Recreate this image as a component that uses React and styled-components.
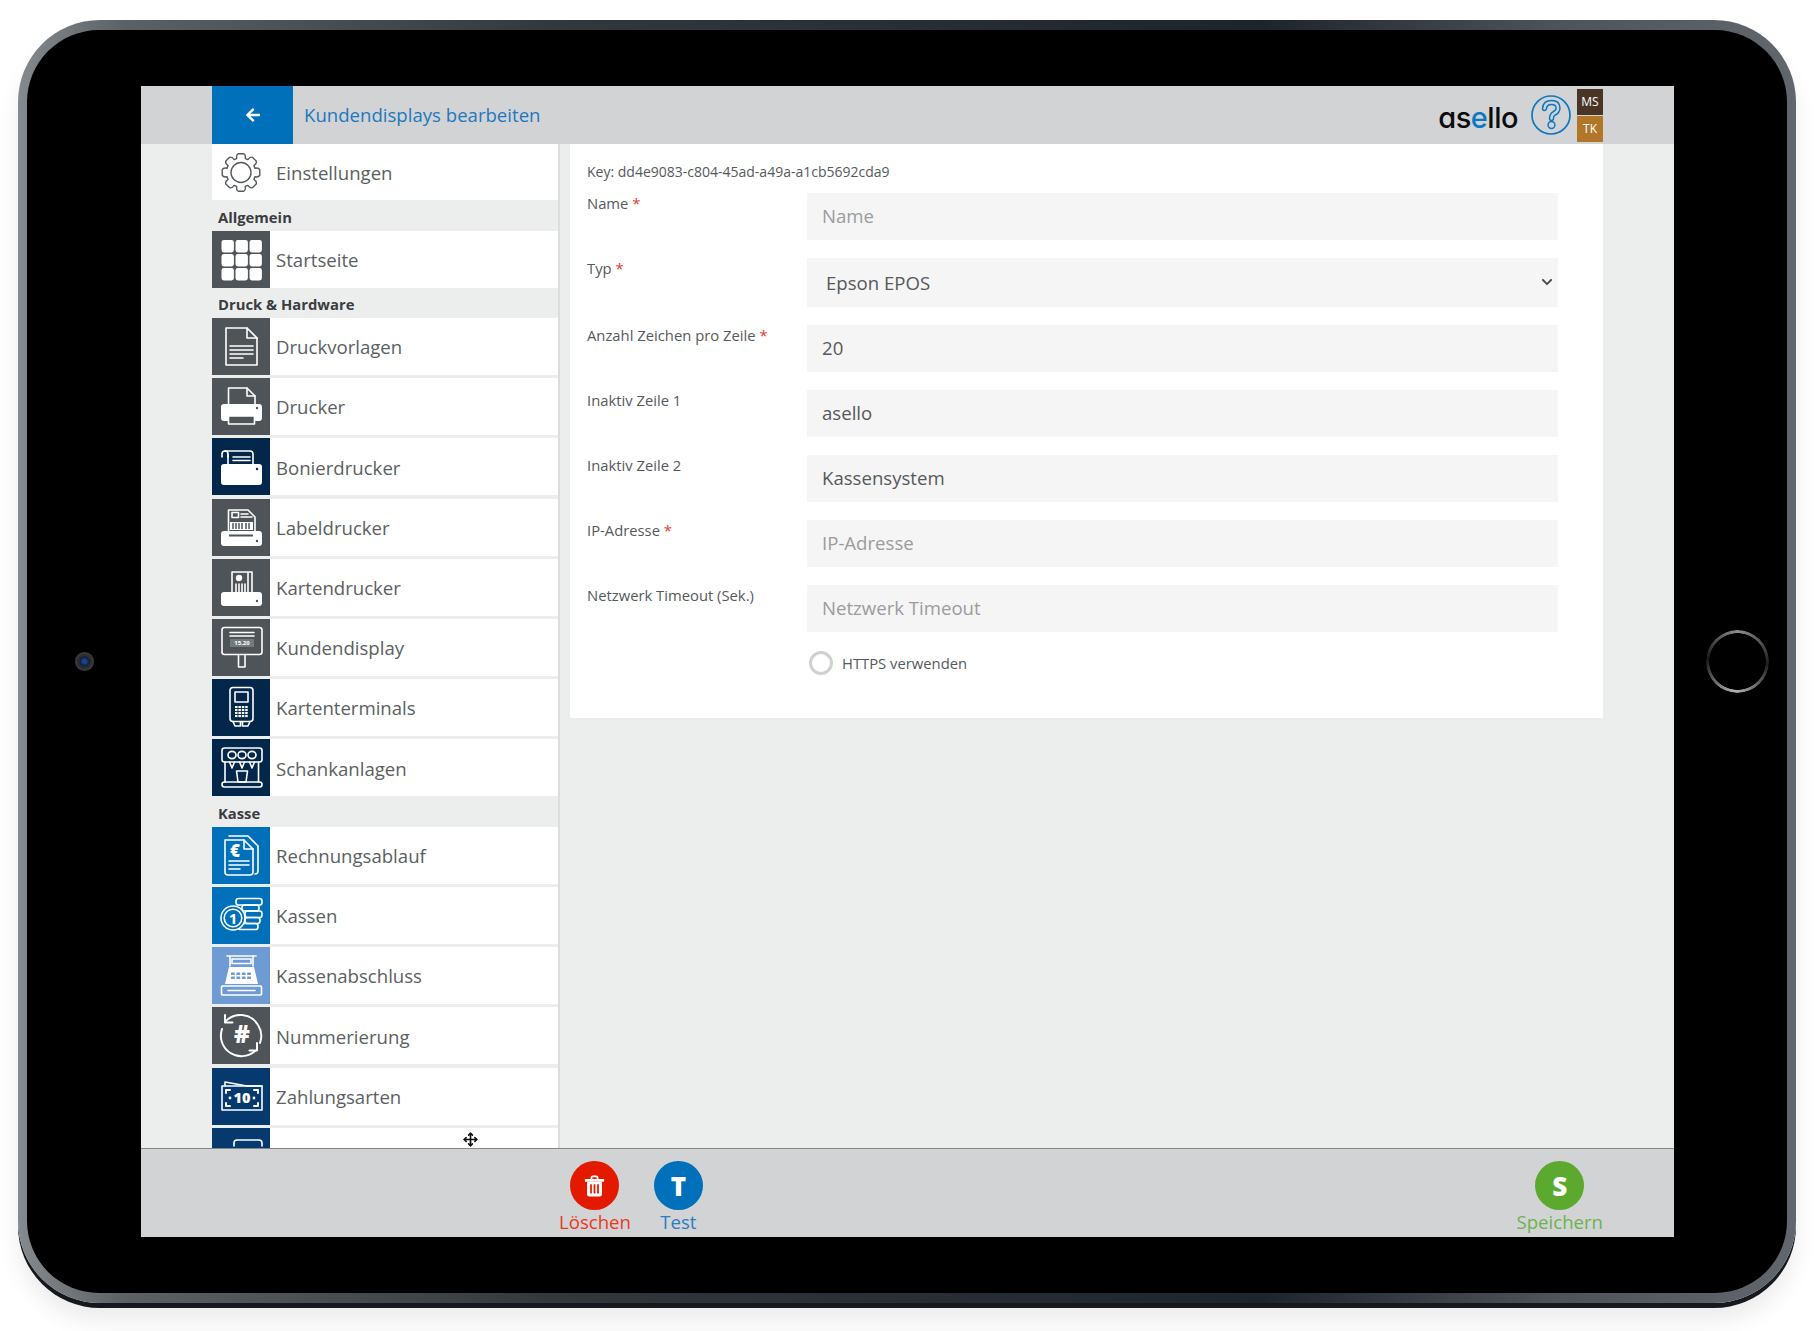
import React from 'react';
import styled, { createGlobalStyle } from 'styled-components';
import { FaArrowLeft, FaChevronDown } from 'react-icons/fa';
import { Move } from 'lucide-react';

const GlobalStyle = createGlobalStyle`
  html, body {
    margin: 0;
    background: #fff;
    font-family: "Open Sans", sans-serif;
  }
  * { box-sizing: border-box; }
`;

const GRAY = '#4e5458';
const NAVY = '#02274a';
const BLUE = '#0070ba';
const LIGHT = '#6f9bd4';
const DEEP = '#063a6e';

// gear outline with 8 teeth
const gearPath = (() => {
  const cx = 20, cy = 20, outer = 19, inner = 14.6;
  const pts = [];
  for (let i = 0; i < 8; i++) {
    const a = (i * Math.PI) / 4;
    const at = (r, d) => `${(cx + r * Math.sin(a + d)).toFixed(2)} ${(cy - r * Math.cos(a + d)).toFixed(2)}`;
    pts.push(`${i === 0 ? 'M' : 'L'}${at(inner, -0.3)}`);
    pts.push(`Q${at(outer - 0.5, -0.27)} ${at(outer, -0.14)}`);
    pts.push(`L${at(outer, 0.14)}`);
    pts.push(`Q${at(outer - 0.5, 0.27)} ${at(inner, 0.3)}`);
    const next = `${(cx + inner * Math.sin(a + Math.PI / 4 - 0.3)).toFixed(2)} ${(cy - inner * Math.cos(a + Math.PI / 4 - 0.3)).toFixed(2)}`;
    pts.push(`A${inner} ${inner} 0 0 1 ${next}`);
  }
  return pts.join(' ') + 'Z';
})();

const Glyph = styled.svg`
  display: block;
  width: 58px;
  height: 57px;
  fill: none;
  stroke: #fff;
  stroke-width: 1.6;
  stroke-linejoin: round;
  stroke-linecap: round;
`;

const Icon = ({ children }) => <Glyph viewBox="0 0 58 57">{children}</Glyph>;

const solid = { fill: '#fff', stroke: 'none' };
const cut = { fill: 'currentColor', stroke: 'none' };

const PrinterBody = ({ y = 26, h = 21, dotY = 31 }) => (
  <>
    <rect x="9" y={y} width="41" height={h} rx="3" {...solid} />
    <circle cx="45" cy={dotY} r="1.2" {...cut} />
  </>
);

const icons = {
  gear: (
    <Glyph viewBox="0 0 58 57">
      <g transform="translate(9 8.5)" style={{ stroke: '#55595c', strokeWidth: 1.4 }}>
        <path d={gearPath} />
        <circle cx="20" cy="20" r="10" />
      </g>
    </Glyph>
  ),
  grid: (
    <Icon>
      {[0, 1, 2].map((r) =>
        [0, 1, 2].map((c) => (
          <rect key={`${r}${c}`} x={9.5 + c * 14} y={9 + r * 14} width="12.4" height="12.4" rx="2.4" {...solid} />
        ))
      )}
    </Icon>
  ),
  doc: (
    <Icon>
      <path d="M14 10H35L45 20V47H14Z" />
      <path d="M35 10V20H45" />
      <path d="M18 28H41M18 32H41M18 36H41M18 40H31" />
    </Icon>
  ),
  printer: (
    <Icon>
      <path d="M16.5 28V10H35L43 18V28" />
      <path d="M35 10V18H43" />
      <PrinterBody y={26} h={17} dotY={30} />
      <rect x="16.5" y="38" width="26" height="8" fill="currentColor" />
    </Icon>
  ),
  receipt: (
    <Icon>
      <path d="M10 19V16Q10 13 13 13H38Q41 13 41 16V27" />
      <path d="M16 19V16Q16 13 13 13" />
      <path d="M16 26V16M21 19H38M21 22.5H38" />
      <PrinterBody y={26} h={21} dotY={31} />
    </Icon>
  ),
  label: (
    <Icon>
      <path d="M16.5 33V11H36L43 18V33" />
      <rect x="20" y="13.5" width="6.5" height="5" />
      <path d="M29 15H36M29 18H40" />
      <rect x="18" y="23" width="23" height="8" {...solid} />
      <path d="M21 24.5V29.5M24 24.5V29.5M27 24.5V29.5M30 24.5V29.5M34 24.5V29.5M37 24.5V29.5" style={{ stroke: 'currentColor', strokeWidth: 1.5 }} />
      <PrinterBody y={32} h={15} dotY={42} />
      <rect x="17" y="35.5" width="24" height="2" {...cut} />
    </Icon>
  ),
  cardPrinter: (
    <Icon>
      <path d="M20 34V13H40V34" />
      <circle cx="27" cy="19" r="3.2" {...solid} />
      <path d="M24 25V33M27 25V33M30 25V33M33 25V33" />
      <path d="M36 14V33" />
      <rect x="9" y="33" width="41" height="14" rx="3" {...solid} />
      <circle cx="45" cy="42" r="1.2" {...cut} />
    </Icon>
  ),
  display: (
    <Icon>
      <rect x="10" y="8.5" width="40" height="27" rx="2.5" />
      <path d="M18 13.5H42M18 17H42" />
      <rect x="18" y="20" width="24" height="8" fill="rgba(255,255,255,.22)" stroke="none" />
      <text x="30" y="26.2" textAnchor="middle" fontSize="6" fontWeight="700" fontFamily="Open Sans" fill="#fff" stroke="none">15,20</text>
      <path d="M26.5 35.5V48H33V35.5" />
    </Icon>
  ),
  terminal: (
    <Icon>
      <rect x="18" y="8.5" width="23" height="34" rx="3" />
      <rect x="23" y="13" width="13" height="10" />
      {[0, 1, 2, 3].map((r) =>
        [0, 1, 2, 3].map((c) => (
          <rect key={`${r}${c}`} x={23 + c * 3.4} y={27 + r * 3} width="2.5" height="2.1" {...solid} />
        ))
      )}
      <path d="M21 42.5L23 47H28.5V43M30.5 43V47H36L38 42.5" />
    </Icon>
  ),
  tap: (
    <Icon>
      <rect x="10" y="9" width="40" height="14" rx="2.5" />
      <ellipse cx="20" cy="16" rx="4" ry="3.6" />
      <ellipse cx="30" cy="16" rx="4" ry="3.6" />
      <ellipse cx="40" cy="16" rx="4" ry="3.6" />
      <path d="M17.5 23L20 29L22.5 23M27.5 23L30 29L32.5 23M37.5 23L40 29L42.5 23" />
      <path d="M13 23V43M46.5 23V43" />
      <path d="M24.5 32H35.5L34 43H26Z" />
      <rect x="10" y="43" width="40" height="5" rx="2.4" />
    </Icon>
  ),
  invoice: (
    <Icon>
      <path d="M17 9H36L46 19V44Q46 47 43 47" />
      <path d="M13 13H32L41 22V45Q41 48 38 48H16Q13 48 13 45Z" fill="currentColor" />
      <path d="M32 13V22H41" />
      <text x="23" y="30" textAnchor="middle" fontSize="17" fontWeight="800" fontFamily="Open Sans" fill="#fff" stroke="none">€</text>
      <path d="M17 34H37M17 38H37M17 42H28" />
    </Icon>
  ),
  coins: (
    <Icon>
      <rect x="24" y="11.5" width="26" height="6.5" rx="2.6" />
      <rect x="30" y="18" width="17" height="6" rx="2.6" />
      <rect x="33" y="24" width="17" height="6.5" rx="2.6" />
      <rect x="33" y="30.5" width="15" height="6" rx="2.6" />
      <rect x="26" y="36.5" width="20" height="6" rx="2.6" />
      <circle cx="21" cy="31" r="12" fill="currentColor" />
      <circle cx="21" cy="31" r="8.8" />
      <text x="21" y="36.6" textAnchor="middle" fontSize="15" fontWeight="700" fontFamily="Open Sans" fill="#fff" stroke="none">1</text>
    </Icon>
  ),
  register: (
    <Icon>
      <path d="M15 9H44" />
      <path d="M18 9V19M41 9V19" />
      <rect x="20" y="12" width="19" height="4.5" />
      <path d="M17 20H42L46 37H13Z" {...solid} />
      {[0, 1].map((r) =>
        [0, 1, 2, 3].map((c) => (
          <rect key={`${r}${c}`} x={19 + c * 5.4} y={25.5 + r * 4} width="3.8" height="2.6" rx=".6" {...cut} />
        ))
      )}
      <rect x="9.5" y="39" width="40" height="9" rx="1" />
      <path d="M16 43.5H43" />
    </Icon>
  ),
  number: (
    <Icon>
      <path d="M13 15A20.5 20.5 0 0 1 46 18A20.5 20.5 0 0 1 48 36" style={{ strokeWidth: 2 }} />
      <path d="M10 22A20.5 20.5 0 0 0 43 44" style={{ strokeWidth: 2 }} />
      <path d="M13 8V15.5H20.5M45 36V43.5H37.5" style={{ strokeWidth: 2 }} />
      <text x="30" y="36" textAnchor="middle" fontSize="24" fontWeight="800" fontFamily="Open Sans" fill="#fff" stroke="none">#</text>
    </Icon>
  ),
  bill: (
    <Icon>
      <path d="M13 18V14L35 18H50" />
      <rect x="10" y="18" width="40" height="24" />
      <path d="M14 25V22H18M42 22H46V25M14 35V38H18M42 38H46V35" style={{ strokeWidth: 2 }} />
      <circle cx="18" cy="30" r="1.4" {...solid} />
      <circle cx="42" cy="30" r="1.4" {...solid} />
      <text x="30" y="35.4" textAnchor="middle" fontSize="14.5" fontWeight="800" fontFamily="Open Sans" fill="#fff" stroke="none">10</text>
    </Icon>
  ),
  partial: (
    <Icon>
      <path d="M22 18V15Q22 12 25 12H47Q50 12 50 15V18" />
    </Icon>
  ),
};

const groups = [
  {
    title: 'Allgemein',
    items: [{ icon: 'grid', bg: GRAY, label: 'Startseite' }],
  },
  {
    title: 'Druck & Hardware',
    items: [
      { icon: 'doc', bg: GRAY, label: 'Druckvorlagen' },
      { icon: 'printer', bg: GRAY, label: 'Drucker' },
      { icon: 'receipt', bg: NAVY, label: 'Bonierdrucker' },
      { icon: 'label', bg: GRAY, label: 'Labeldrucker' },
      { icon: 'cardPrinter', bg: GRAY, label: 'Kartendrucker' },
      { icon: 'display', bg: GRAY, label: 'Kundendisplay' },
      { icon: 'terminal', bg: NAVY, label: 'Kartenterminals' },
      { icon: 'tap', bg: NAVY, label: 'Schankanlagen' },
    ],
  },
  {
    title: 'Kasse',
    items: [
      { icon: 'invoice', bg: BLUE, label: 'Rechnungsablauf' },
      { icon: 'coins', bg: BLUE, label: 'Kassen' },
      { icon: 'register', bg: LIGHT, label: 'Kassenabschluss' },
      { icon: 'number', bg: GRAY, label: 'Nummerierung' },
      { icon: 'bill', bg: DEEP, label: 'Zahlungsarten' },
      { icon: 'partial', bg: DEEP, label: '' },
    ],
  },
];

const fields = [
  { label: 'Name', required: true, placeholder: 'Name' },
  { label: 'Typ', required: true, select: true, value: 'Epson EPOS' },
  { label: 'Anzahl Zeichen pro Zeile', required: true, value: '20' },
  { label: 'Inaktiv Zeile 1', value: 'asello' },
  { label: 'Inaktiv Zeile 2', value: 'Kassensystem' },
  { label: 'IP-Adresse', required: true, placeholder: 'IP-Adresse' },
  { label: 'Netzwerk Timeout (Sek.)', placeholder: 'Netzwerk Timeout' },
];

const App = () => (
  <>
    <GlobalStyle />
    <Page>
      <Tablet>
        <Bezel>
          <BezelSide $width={114}>
            <Camera />
          </BezelSide>
          <Screen>
            <Header>
              <BackButton>
                <FaArrowLeft size={16} color="#fff" />
              </BackButton>
              <Title>Kundendisplays bearbeiten</Title>
              <Logo>
                as<LogoAccent>e</LogoAccent>llo
              </Logo>
              <HelpIcon viewBox="0 0 40 40">
                <circle cx="20" cy="20" r="19" fill="none" stroke="#0b78c2" strokeWidth="1.7" />
                <path d="M13.5 13.5Q14 7.5 20.5 7.5Q27 7.5 27 13Q27 16.5 23 18.5Q20.5 20 20.5 23.5" fill="none" stroke="#0b78c2" strokeWidth="5.4" strokeLinecap="round" />
                <path d="M13.5 13.5Q14 7.5 20.5 7.5Q27 7.5 27 13Q27 16.5 23 18.5Q20.5 20 20.5 23.5" fill="none" stroke="#d2d3d5" strokeWidth="2.4" strokeLinecap="round" />
                <circle cx="20.5" cy="30" r="3.4" fill="#d2d3d5" stroke="#0b78c2" strokeWidth="1.5" />
              </HelpIcon>
              <Badges>
                <Badge $bg="#4a3425">MS</Badge>
                <Badge $bg="#b0772a">TK</Badge>
              </Badges>
            </Header>

            <Main>
              <Sidebar>
                <Row $height={56}>
                  <Tile $bg="#fff">{icons.gear}</Tile>
                  <RowLabel>Einstellungen</RowLabel>
                </Row>
                {groups.map((group) => (
                  <React.Fragment key={group.title}>
                    <SectionLabel>{group.title}</SectionLabel>
                    <RowList>
                      {group.items.map((item) => (
                        <Row key={item.icon}>
                          <Tile $bg={item.bg}>{icons[item.icon]}</Tile>
                          <RowLabel>{item.label}</RowLabel>
                        </Row>
                      ))}
                    </RowList>
                  </React.Fragment>
                ))}
              </Sidebar>

              <Card>
                <KeyLine>Key: dd4e9083-c804-45ad-a49a-a1cb5692cda9</KeyLine>
                {fields.map((field) => (
                  <FieldRow key={field.label}>
                    <FieldLabel>
                      {field.label}
                      {field.required && <Star> *</Star>}
                    </FieldLabel>
                    {field.select ? (
                      <SelectWrap>
                        <Select defaultValue={field.value}>
                          <option>{field.value}</option>
                        </Select>
                        <SelectChevron>
                          <FaChevronDown size={12} />
                        </SelectChevron>
                      </SelectWrap>
                    ) : (
                      <Input placeholder={field.placeholder} defaultValue={field.value} />
                    )}
                  </FieldRow>
                ))}
                <RadioRow>
                  <Radio />
                  <RadioLabel>HTTPS verwenden</RadioLabel>
                </RadioRow>
              </Card>
            </Main>

            <Footer>
              <Action $color="#e8391f" $bg="#e41a00">
                <ActionCircle>
                  <TrashIcon viewBox="0 0 24 24">
                    <path d="M8.5 4V2.8Q8.5 1 10.5 1H13.5Q15.5 1 15.5 2.8V4" fill="none" stroke="#fff" strokeWidth="2" />
                    <rect x="1" y="4" width="22" height="3" rx=".6" fill="#fff" />
                    <path d="M3.5 7H20.5V21.5Q20.5 24 18 24H6Q3.5 24 3.5 21.5Z" fill="#fff" />
                    <path d="M8 10V20.5M12 10V20.5M16 10V20.5" stroke="#e41a00" strokeWidth="2" />
                  </TrashIcon>
                </ActionCircle>
                <ActionLabel>Löschen</ActionLabel>
              </Action>
              <Action $color="#2a7dc0" $bg="#0070ba">
                <ActionCircle>T</ActionCircle>
                <ActionLabel>Test</ActionLabel>
              </Action>
              <Action $color="#6cb34e" $bg="#5ba92f" $push>
                <ActionCircle>S</ActionCircle>
                <ActionLabel>Speichern</ActionLabel>
              </Action>
            </Footer>

            <MoveCursor>
              <Move size={15} strokeWidth={2.6} color="#111" />
            </MoveCursor>
          </Screen>
          <BezelSide $width={113} $shift={14}>
            <HomeRing />
          </BezelSide>
        </Bezel>
      </Tablet>
    </Page>
  </>
);

const Page = styled.div`
  width: 1815px;
  height: 1331px;
  padding: 20px 0 0 18px;
  overflow: hidden;
  background: #fff;
`;

const Tablet = styled.div`
  width: 1778px;
  height: 1283px;
  padding: 10px 9px;
  border-radius: 82px;
  background: linear-gradient(90deg, #858a8e 0%, #5c6166 6%, #33383d 30%, #1e242c 70%, #4d5258 86%, #62676e 100%);
  box-shadow: 0 5px 0 #15181c, 0 18px 22px rgba(0, 0, 0, 0.08);
`;

const Bezel = styled.div`
  display: flex;
  height: 100%;
  padding: 56px 0;
  border-radius: 72px;
  background: #000;
`;

const BezelSide = styled.div`
  flex: 0 0 ${(p) => p.$width}px;
  display: flex;
  align-items: center;
  justify-content: center;
  padding-left: ${(p) => p.$shift || 0}px;
`;

const Camera = styled.div`
  width: 19px;
  height: 19px;
  border-radius: 50%;
  background: radial-gradient(circle, #1c4088 0 16%, #12203c 30%, #2e2e30 50%, #555557 100%);
`;

const HomeRing = styled.div`
  width: 63px;
  height: 63px;
  border-radius: 50%;
  background: conic-gradient(#8e8e92, #1e1e20 95deg, #b4b4b8 185deg, #161618 275deg, #8e8e92);
  -webkit-mask: radial-gradient(circle, transparent 0 28px, #000 28.6px);
  mask: radial-gradient(circle, transparent 0 28px, #000 28.6px);
`;

const Screen = styled.div`
  position: relative;
  flex: 0 0 1533px;
  display: flex;
  flex-direction: column;
  background: #eceeed;
`;

const Header = styled.header`
  flex: 0 0 58px;
  display: flex;
  align-items: center;
  padding: 0 71px;
  background: #d2d3d5;
`;

const BackButton = styled.div`
  width: 81px;
  height: 100%;
  display: flex;
  align-items: center;
  justify-content: center;
  background: #0070ba;
`;

const Title = styled.h1`
  margin: 0 0 2px 11px;
  font-size: 18.6px;
  font-weight: 400;
  color: #1f78bd;
`;

const Logo = styled.div`
  margin-left: auto;
  padding-top: 4px;
  font-family: Inter, sans-serif;
  font-feature-settings: 'cv11' 1;
  font-size: 29px;
  font-weight: 500;
  letter-spacing: -0.5px;
  color: #0c0c0c;
`;

const LogoAccent = styled.span`
  color: #0b78c2;
`;

const HelpIcon = styled.svg`
  width: 40px;
  height: 40px;
  margin: 0 6px 0 13px;
`;

const Badges = styled.div`
  display: flex;
  flex-direction: column;
  gap: 1px;
`;

const Badge = styled.div`
  width: 26px;
  height: 26px;
  display: flex;
  align-items: center;
  justify-content: center;
  font-size: 12px;
  color: #fff;
  background: ${(p) => p.$bg};
`;

const Main = styled.main`
  flex: 1;
  min-height: 0;
  display: flex;
  align-items: flex-start;
  padding-left: 71px;
  overflow: hidden;
`;

const Sidebar = styled.nav`
  flex: 0 0 348px;
  height: 100%;
  border-right: 2px solid #dcdddd;
  overflow: hidden;
`;

const SectionLabel = styled.div`
  height: 30.5px;
  padding: 6.5px 0 0 6px;
  font-size: 14.8px;
  line-height: 20px;
  font-weight: 700;
  color: #3a3d3f;
`;

const RowList = styled.div`
  display: flex;
  flex-direction: column;
  gap: 3.2px;
`;

const Row = styled.div`
  flex: 0 0 auto;
  height: ${(p) => p.$height || 57}px;
  display: flex;
  align-items: center;
  background: #fff;
`;

const Tile = styled.div`
  width: 58px;
  height: 100%;
  color: ${(p) => p.$bg};
  background: ${(p) => p.$bg};
`;

const RowLabel = styled.span`
  margin-left: 6px;
  padding-top: 0.5px;
  font-size: 18.6px;
  color: #5a5f62;
`;

const Card = styled.section`
  width: 1033px;
  margin-left: 10px;
  padding: 18px 45px 43px 17px;
  background: #fff;
`;

const KeyLine = styled.div`
  margin-bottom: 11px;
  font-size: 14px;
  line-height: 20px;
  color: #55595c;
`;

const FieldRow = styled.div`
  display: flex;
  align-items: flex-start;
  margin-bottom: 18px;
`;

const FieldLabel = styled.label`
  flex: 0 0 220px;
  font-size: 14.8px;
  line-height: 20px;
  color: #55595c;
`;

const Star = styled.span`
  color: #e8392c;
`;

const Input = styled.input`
  flex: 1;
  height: 47px;
  padding: 0 15px 2px;
  border: none;
  border-radius: 0;
  outline: none;
  background: #f5f5f5;
  font-family: "Open Sans", sans-serif;
  font-size: 18.6px;
  color: #55595c;

  &::placeholder {
    color: #9a9c9e;
    opacity: 1;
  }
`;

const SelectWrap = styled.div`
  position: relative;
  flex: 1;
  color: #4a4d50;
`;

const Select = styled.select`
  display: block;
  width: 100%;
  height: 49px;
  padding: 0 19px;
  border: none;
  border-radius: 0;
  outline: none;
  appearance: none;
  background: #f5f5f5;
  font-family: "Open Sans", sans-serif;
  font-size: 18.6px;
  color: #55595c;
`;

const SelectChevron = styled.span`
  position: absolute;
  right: 5px;
  top: 18px;
  line-height: 0;
`;

const RadioRow = styled.div`
  display: flex;
  align-items: center;
  margin: 19px 0 0 222px;
`;

const Radio = styled.span`
  width: 24px;
  height: 24px;
  border: 3.5px solid #d0d1d2;
  border-radius: 50%;
`;

const RadioLabel = styled.span`
  margin-left: 9px;
  font-size: 14.8px;
  color: #55595c;
`;

const Footer = styled.footer`
  flex: 0 0 89px;
  display: flex;
  align-items: flex-start;
  gap: 23px;
  padding: 12px 71px 0 418px;
  border-top: 1px solid #85888b;
  background: #d2d3d5;
`;

const Action = styled.div`
  display: flex;
  flex-direction: column;
  align-items: center;
  margin-left: ${(p) => (p.$push ? 'auto' : 0)};
  color: ${(p) => p.$color};
  --circle: ${(p) => p.$bg};
`;

const ActionCircle = styled.div`
  width: 49px;
  height: 49px;
  display: flex;
  align-items: center;
  justify-content: center;
  border-radius: 50%;
  background: var(--circle);
  font-size: 26px;
  font-weight: 800;
  color: #fff;
`;

const ActionLabel = styled.span`
  font-size: 18.6px;
  line-height: 24px;
`;

const TrashIcon = styled.svg`
  width: 21px;
  height: 22px;
`;

const MoveCursor = styled.div`
  position: absolute;
  left: 322px;
  top: 1046px;
  line-height: 0;
`;

export default App;
